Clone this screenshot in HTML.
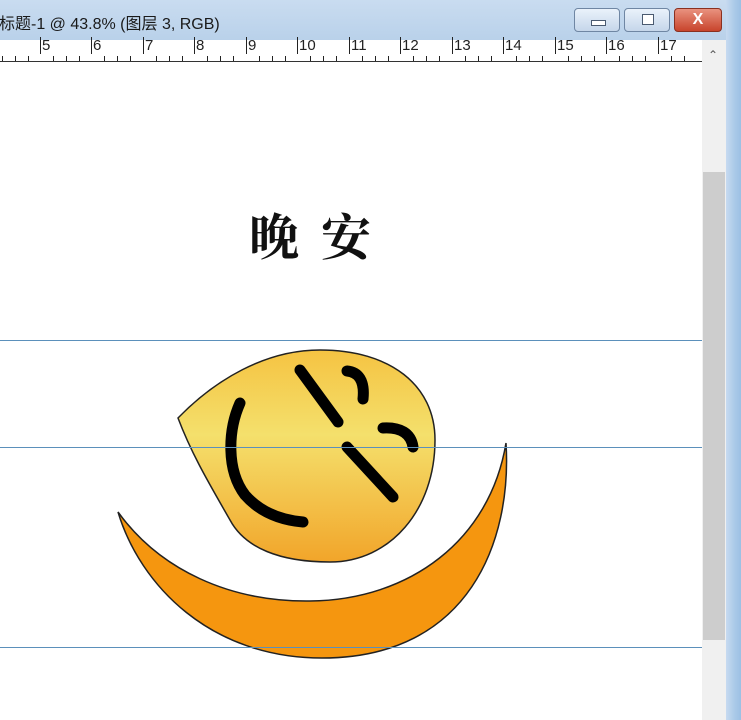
<!DOCTYPE html>
<html><head><meta charset="utf-8">
<style>
html,body{margin:0;padding:0;width:741px;height:720px;overflow:hidden;background:#fff;font-family:"Liberation Sans","Noto Sans CJK SC",sans-serif;}
#title{position:absolute;left:0;top:0;width:741px;height:40px;background:linear-gradient(#c9dcf0,#b9d1ea);}
#title span{position:absolute;left:-1px;top:10px;font-size:16px;color:#1a1a1a;white-space:nowrap;}
.btn{position:absolute;top:8px;height:24px;border:1px solid #6f86a3;border-radius:4px;background:linear-gradient(#eaf2fb,#c5d6ea);box-sizing:border-box;}
#ruler{position:absolute;left:0;top:40px;width:702px;height:21px;background:#fff;border-bottom:1px solid #333;}
#ruler .n{position:absolute;top:-3px;font-size:15px;color:#222;border-left:1px solid #222;padding-left:1px;height:17px;line-height:17px;}
#ruler .t{position:absolute;bottom:0;width:1px;height:5px;background:#222;}
#sb{position:absolute;left:702px;top:40px;width:24px;height:680px;background:#f0f0f0;}
#thumb{position:absolute;left:703px;top:172px;width:22px;height:468px;background:#cdcdcd;}
#rb{position:absolute;left:726px;top:0;width:15px;height:720px;background:linear-gradient(90deg,#c7daf0,#a9c9e8 60%,#9cc0e4);}
.g{position:absolute;left:0;width:702px;height:1px;background:#5b90bb;}
#txt{position:absolute;left:249px;top:198px;font-family:"Noto Serif CJK SC",serif;font-weight:700;font-size:50px;letter-spacing:22px;color:#111;white-space:nowrap;}
</style></head><body>
<div id="title"><span>标题-1 @ 43.8% (图层 3, RGB)</span>
<div class="btn" style="left:574px;width:46px;"><div style="position:absolute;left:16px;top:11px;width:13px;height:4px;background:#fff;border:1px solid #4a5a70;"></div></div>
<div class="btn" style="left:624px;width:46px;"><div style="position:absolute;left:17px;top:5px;width:10px;height:9px;background:#fff;border:1px solid #4a5a70;"></div></div>
<div class="btn" style="left:674px;width:48px;background:linear-gradient(#e9927f,#c8442c);border-color:#8a3020;color:#fff;font-weight:bold;font-size:16px;text-align:center;line-height:22px;">X</div>
</div>
<div id="ruler">
<div class="n" style="left:40px">5</div><div class="n" style="left:91px">6</div><div class="n" style="left:143px">7</div><div class="n" style="left:194px">8</div><div class="n" style="left:246px">9</div><div class="n" style="left:297px">10</div><div class="n" style="left:349px">11</div><div class="n" style="left:400px">12</div><div class="n" style="left:452px">13</div><div class="n" style="left:503px">14</div><div class="n" style="left:555px">15</div><div class="n" style="left:606px">16</div><div class="n" style="left:658px">17</div>
<div class="t" style="left:2px"></div><div class="t" style="left:15px"></div><div class="t" style="left:28px"></div>
<div class="t" style="left:53px"></div><div class="t" style="left:66px"></div><div class="t" style="left:79px"></div>
<div class="t" style="left:104px"></div><div class="t" style="left:117px"></div><div class="t" style="left:130px"></div>
<div class="t" style="left:156px"></div><div class="t" style="left:169px"></div><div class="t" style="left:182px"></div>
<div class="t" style="left:207px"></div><div class="t" style="left:220px"></div><div class="t" style="left:233px"></div>
<div class="t" style="left:259px"></div><div class="t" style="left:272px"></div><div class="t" style="left:285px"></div>
<div class="t" style="left:310px"></div><div class="t" style="left:323px"></div><div class="t" style="left:336px"></div>
<div class="t" style="left:362px"></div><div class="t" style="left:375px"></div><div class="t" style="left:388px"></div>
<div class="t" style="left:413px"></div><div class="t" style="left:426px"></div><div class="t" style="left:439px"></div>
<div class="t" style="left:465px"></div><div class="t" style="left:478px"></div><div class="t" style="left:491px"></div>
<div class="t" style="left:516px"></div><div class="t" style="left:529px"></div><div class="t" style="left:542px"></div>
<div class="t" style="left:568px"></div><div class="t" style="left:581px"></div><div class="t" style="left:594px"></div>
<div class="t" style="left:619px"></div><div class="t" style="left:632px"></div><div class="t" style="left:645px"></div>
<div class="t" style="left:671px"></div><div class="t" style="left:684px"></div>
</div>
<div id="sb"><div style="position:absolute;left:6px;top:8px;font-size:12px;color:#555;">&#8963;</div></div>
<div id="thumb"></div>
<div id="rb"></div>
<div id="txt">晚安</div>
<svg style="position:absolute;left:0;top:0" width="702" height="720">
<defs><linearGradient id="fg" x1="0" y1="0" x2="0" y2="1">
<stop offset="0" stop-color="#f5c342"/><stop offset="0.4" stop-color="#f4e06c"/><stop offset="1" stop-color="#f2a52a"/></linearGradient></defs>
<path d="M178,418 C215,380 265,350 320,350 C390,350 435,385 435,440 C435,510 390,562 330,562 C280,562 245,548 230,520 C210,485 192,455 178,418 Z" fill="url(#fg)" stroke="#222" stroke-width="1.5"/>
<path d="M118,512 C160,570 230,602 310,601 C410,600 490,540 506,443 C512,540 470,658 322,658 C210,658 140,585 118,512 Z" fill="#f5960f" stroke="#222" stroke-width="1.5"/>
<g fill="none" stroke="#000" stroke-width="11" stroke-linecap="round">
<path d="M240,403 C228,430 226,470 245,495 C260,512 280,520 303,522"/>
<path d="M300,370 L338,422"/>
<path d="M347,371 C358,372 365,380 363,399"/>
<path d="M347,447 L393,497"/>
<path d="M383,428 C400,427 411,433 413,447"/>
</g>
</svg>
<div class="g" style="top:340px"></div><div class="g" style="top:447px"></div><div class="g" style="top:647px"></div>
</body></html>
